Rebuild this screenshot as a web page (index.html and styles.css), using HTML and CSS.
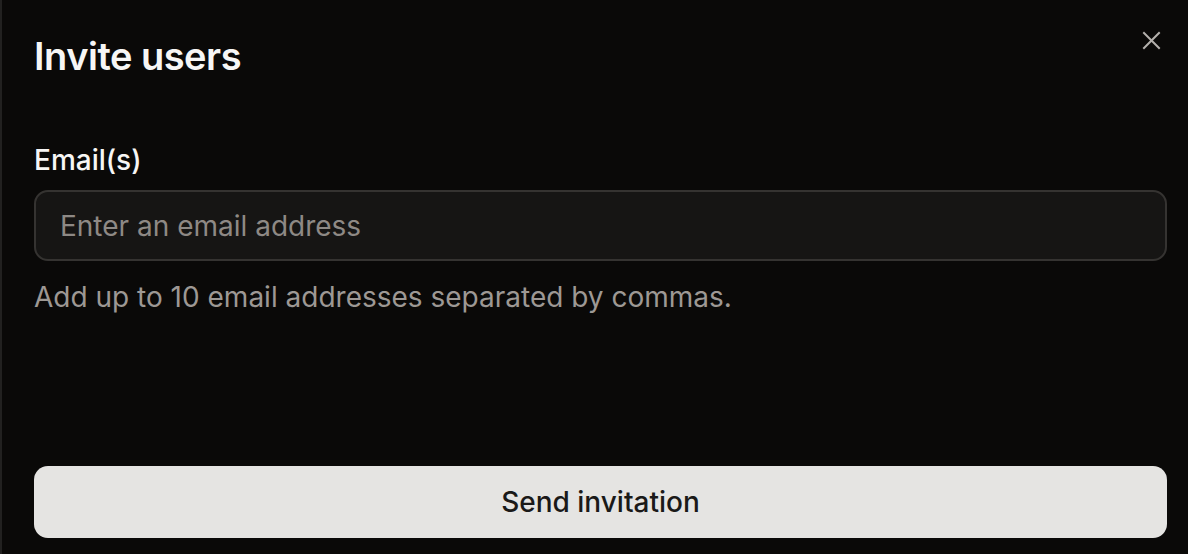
FILE: index.html
```html
<!DOCTYPE html>
<html lang="en">
<head>
<meta charset="utf-8">
<title>Invite users</title>
<link rel="stylesheet" href="styles.css">
</head>
<body>
<div class="dialog">
  <header class="dialog-header">
    <h1 class="dialog-title">Invite users</h1>
    <button class="close-btn" aria-label="Close">
      <svg width="19" height="19" viewBox="0 0 19 19" fill="none" stroke="currentColor" stroke-width="2" stroke-linecap="square">
        <path d="M2 2L17 17M17 2L2 17"/>
      </svg>
    </button>
  </header>
  <div class="field">
    <label class="field-label" for="emails">Email(s)</label>
    <input class="field-input" id="emails" type="text" placeholder="Enter an email address">
    <p class="field-help">Add up to 10 email addresses separated by commas.</p>
  </div>
  <div class="dialog-footer">
    <button class="primary-btn">Send invitation</button>
  </div>
</div>
</body>
</html>
```
FILE: styles.css
```css
html, body {
  margin: 0;
  padding: 0;
  background: #0a0908;
  font-family: Inter, "Noto Sans", sans-serif;
}

.dialog {
  box-sizing: border-box;
  height: 554px;
  border-left: 2px solid #222120;
  padding: 34px 21px 16px 32px;
  display: flex;
  flex-direction: column;
}

.dialog-header {
  display: flex;
  justify-content: space-between;
  align-items: flex-start;
}

.dialog-title {
  margin: 0;
  font-size: 38px;
  line-height: 44px;
  font-weight: 600;
  letter-spacing: -0.5px;
  color: #f7f6f5;
}

.close-btn {
  background: none;
  border: 0;
  padding: 0;
  margin-top: -3px;
  margin-right: 6px;
  color: #b4b0ac;
  width: 19px;
  height: 19px;
  display: flex;
  cursor: pointer;
}

.field {
  margin-top: 66px;
  display: flex;
  flex-direction: column;
}

.field-label {
  font-size: 28px;
  line-height: 32px;
  font-weight: 500;
  color: #f7f6f5;
}

.field-input {
  box-sizing: border-box;
  margin-top: 14px;
  height: 71px;
  width: 100%;
  background: #161514;
  border: 2px solid #353331;
  border-radius: 14px;
  padding: 0 24px;
  font-family: inherit;
  font-size: 28px;
  color: #f7f6f5;
  outline: none;
}

.field-input::placeholder {
  color: #8e8985;
}

.field-help {
  margin: 20px 0 0;
  font-size: 28px;
  line-height: 32px;
  color: #9d9894;
}

.dialog-footer {
  margin-top: auto;
}

.primary-btn {
  width: 100%;
  height: 72px;
  border: 0;
  border-radius: 14px;
  background: #e5e4e2;
  color: #1a1918;
  font-family: inherit;
  font-size: 28px;
  font-weight: 500;
  cursor: pointer;
}
```
